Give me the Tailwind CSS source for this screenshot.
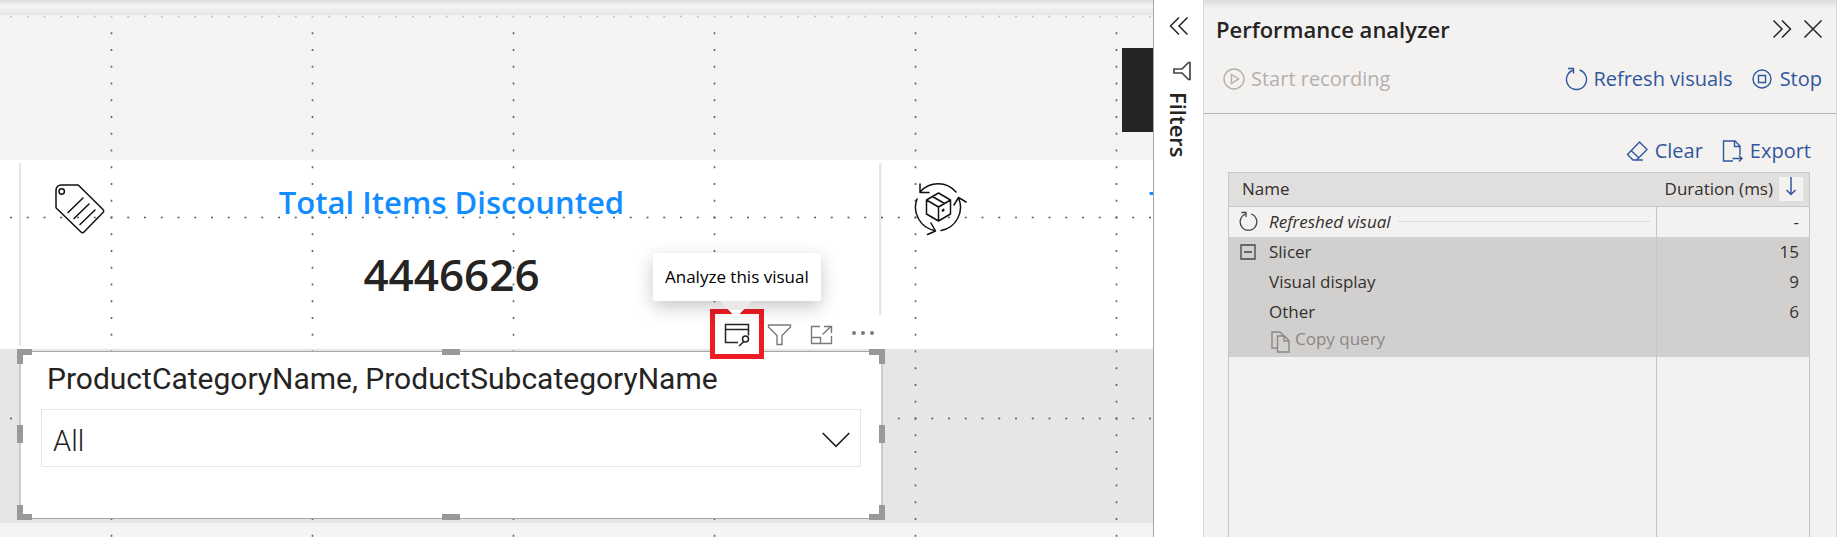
<!DOCTYPE html>
<html lang="en">
<head>
<meta charset="utf-8">
<meta name="viewport" content="width=device-width, initial-scale=1">
<title>Performance analyzer</title>
<script src="https://cdn.jsdelivr.net/npm/@tailwindcss/browser@4"></script>
</head>
<body class="flex h-screen overflow-hidden bg-[#f3f2f1] font-['Open_Sans','Noto_Sans',sans-serif] text-[#252423]">

<!-- Report canvas -->
<main class="relative flex min-w-0 flex-1 flex-col overflow-hidden bg-[#f4f4f4]">
  <!-- Dotted alignment grid -->
  <svg class="pointer-events-none absolute inset-0 z-10 h-full w-full" aria-hidden="true">
    <defs>
      <pattern id="dots-x" x="110.5" y="0" width="16.75" height="201" patternUnits="userSpaceOnUse"><circle cx="1" cy="16.500" r="1" fill="#555"/></pattern>
      <pattern id="dots-y" x="0" y="15.500" width="201" height="16.75" patternUnits="userSpaceOnUse"><circle cx="111.500" cy="1" r="1" fill="#555"/></pattern>
    </defs>
    <rect x="0" y="15" width="100%" height="5" fill="url(#dots-x)" opacity=".35"/>
    <rect x="0" y="30" width="100%" height="100%" fill="url(#dots-x)"/>
    <rect x="0" y="30" width="100%" height="100%" fill="url(#dots-y)"/>
  </svg>

  <div class="h-[15px] shrink-0 bg-linear-to-b from-[#dcdcdc] via-[#f5f5f5] via-40% to-[#e6e6e6]"></div>
  <section class="flex h-[145px] shrink-0 items-start justify-end pt-[33px]">
    <div class="relative z-20 h-[84px] w-[31px] bg-[#252423]"></div>
  </section>

  <section class="flex h-[189px] shrink-0 bg-white pt-[3px] pl-[19px]">
    <article class="flex h-[183px] w-[863px] shrink-0 border-l-2 border-[#e6e6e6]">
      <svg class="relative z-20 mt-[20px] ml-[33px] h-[52px] w-[52px] shrink-0" viewBox="0 0 52 52" fill="none" stroke="#111" stroke-width="1.5" stroke-linecap="round" stroke-linejoin="round" aria-hidden="true">
        <path d="M2 7a5 5 0 0 1 5-5H23.500a2 2 0 0 1 1.500.7L49 26.500a2 2 0 0 1 0 3L30 49a2 2 0 0 1-3 0L2.700 25.500A2 2 0 0 1 2 24z"/>
        <circle cx="7.700" cy="8.500" r="2.700"/>
        <path d="M29 15 14 29.500M35 21 20 35.500M41 27 26 41.500"/>
      </svg>
      <div class="relative z-20 flex flex-1 flex-col items-center pr-[82px]">
        <h2 class="mt-[17px] text-[31px] leading-[44px] font-semibold text-[#118dff]">Total Items Discounted</h2>
        <p class="mt-[20px] text-[44px] leading-[60px] font-semibold">4446626</p>
      </div>
      <div class="h-[152px] w-[3px] border-l-2 border-[#e6e6e6] bg-[#f6f6f6]"></div>
    </article>
    <article class="flex min-w-0 flex-1 justify-between overflow-hidden">
      <svg class="relative z-20 mt-[18px] ml-[31px] h-[56px] w-[56px] shrink-0" viewBox="0 0 56 56" fill="none" stroke="#111" stroke-width="1.500" stroke-linecap="round" stroke-linejoin="round" aria-hidden="true">
        <path d="M7.500 10.500A23.500 23.500 0 0 1 43 11M7 3v8.500h9M4 18A23.500 23.500 0 0 0 22 49.500M18 42l4.500 8-8 3.500M28 49.500A23.500 23.500 0 0 0 45.500 17M41 24l4.500-7.500L53 21"/>
        <path d="M25.500 12 37.500 19V33L25.500 40 13.500 33V19zM13.500 19l12 7 12-7M25.500 26v14M19.500 15.500l12 7"/>
        <path d="m29.500 29 1.200-.7v1.200l-1.200.7z"/>
      </svg>
      <h2 class="mt-[17px] w-[4px] overflow-hidden text-[31px] leading-[44px] font-semibold text-[#118dff]">T</h2>
    </article>
  </section>

  <section class="h-[174px] shrink-0 bg-[#e6e6e6] pt-[2px] pl-[19px]">
    <!-- Selected slicer visual -->
    <div class="relative z-20 flex h-[168px] w-[864px] flex-col border border-x-2 border-[#a6a6a6] border-x-[#cccccc] bg-white px-[20px]">
      <label for="category" class="mt-[8px] px-[6px] font-[Roboto,sans-serif] text-[30px] leading-[38px]">ProductCategoryName, ProductSubcategoryName</label>
      <div class="relative mt-[11px]">
        <select id="category" class="block h-[58px] w-full appearance-none border border-[#e6e6e6] bg-white px-[11px] pt-2 font-[Roboto,sans-serif] text-[29px] font-light"><option>All</option></select>
        <svg class="pointer-events-none absolute top-[23px] right-[11px] h-[16px] w-[28px]" viewBox="0 0 28 16" fill="none" stroke="#222" stroke-width="1.700" aria-hidden="true"><path d="M.7 1 14 14.300 27.300 1"/></svg>
      </div>
      <!-- Resize handles -->
      <svg class="pointer-events-none absolute -top-[3px] -left-[4px] h-[172px] w-[868px]" viewBox="0 0 868 172" fill="#999" aria-hidden="true">
        <path d="M0 0h15v6H6v9H0zM425 0h18v6h-18zM852 0h16v15h-6V6h-10zM0 76h6v18H0zM862 76h6v18h-6zM0 156h6v9h9v6H0zM425 165h18v6h-18zM862 156h6v15h-16v-6h10z"/>
      </svg>
    </div>
  </section>

  <!-- Visual header actions -->
  <div class="absolute top-[309px] left-[710px] z-30 flex h-[50px] items-start text-[#7a7a7a]">
    <button type="button" aria-label="Analyze this visual" class="flex h-[50px] w-[54px] items-center justify-center border-5 border-[#ed1c24] bg-white text-[#252423]">
      <svg class="h-[26px] w-[26px]" viewBox="0 0 26 26" fill="none" stroke="currentColor" stroke-width="1.500" aria-hidden="true"><path d="M14 21.500H1.500V3.500H24.500V14.500M1.500 8.500h23M15 25l5-4.500"/><circle cx="21.500" cy="18" r="3"/></svg>
    </button>
    <button type="button" aria-label="Filters" class="mt-[14px] ml-[3px]">
      <svg class="h-[24px] w-[25px]" viewBox="0 0 25 24" fill="none" stroke="currentColor" stroke-width="1.400" aria-hidden="true"><path d="M1.500 2h22v2L15 12.500V21.500h-5V12.500L1.500 4z"/></svg>
    </button>
    <button type="button" aria-label="Focus mode" class="mt-[15px] ml-[18px]">
      <svg class="h-[22px] w-[23px]" viewBox="0 0 23 22" fill="none" stroke="currentColor" stroke-width="1.400" aria-hidden="true"><path d="M10 2.500H1.500V19.500H21.500V12M1.500 13.500h9v6M12.500 10.500 21 2.500M14 2.500h7.500V9"/></svg>
    </button>
    <button type="button" aria-label="More options" class="mt-[20px] ml-[18px]">
      <svg class="h-[8px] w-[24px]" viewBox="0 0 24 8" fill="currentColor" aria-hidden="true"><circle cx="3" cy="4" r="2"/><circle cx="12" cy="4" r="2"/><circle cx="21" cy="4" r="2"/></svg>
    </button>
  </div>

  <!-- Tooltip -->
  <div role="tooltip" class="absolute top-[253px] left-[653px] z-40 rounded-xs bg-white px-[12px] py-[12px] text-[17px] leading-[24px] whitespace-nowrap text-black shadow-[0_6px_18px_rgba(0,0,0,0.22)]">Analyze this visual
    <svg class="absolute top-full left-[67px] h-[16px] w-[32px]" viewBox="0 0 32 16" aria-hidden="true"><path d="M0 0H32L19 13.500a4 4 0 0 1-6 0z" fill="#fff"/><path d="M0 0h32L23 9H9z" fill="#e9e9e9"/></svg>
  </div>
</main>

<!-- Collapsed filters pane -->
<aside class="flex w-[51px] shrink-0 flex-col items-center border-x border-l-[#a6a6a6] border-r-[#d8d8d8] bg-white pt-[16px]">
  <button type="button" aria-label="Expand filters" class="text-[#252423]">
    <svg class="h-[20px] w-[20px]" viewBox="0 0 20 20" fill="none" stroke="currentColor" stroke-width="1.500" aria-hidden="true"><path d="M10 1.500 1.500 10 10 18.500M18.500 1.500 10 10l8.500 8.500"/></svg>
  </button>
  <svg class="mt-[25px] ml-[6px] h-[20px] w-[18px]" viewBox="0 0 18 20" fill="none" stroke="#444" stroke-width="1.700" aria-hidden="true"><path d="M17 1.500v17h-1.500L9 12H1V8h8l6.500-6.500z"/></svg>
  <h2 class="mt-[11px] text-[22px] leading-[28px] font-semibold [writing-mode:vertical-rl]">Filters</h2>
</aside>

<!-- Performance analyzer pane -->
<aside class="flex w-[633px] shrink-0 flex-col border-r border-[#d8d8d8] bg-[#f3f2f1]">
  <header class="flex h-[58px] shrink-0 items-center justify-between bg-linear-to-b from-[#dddcdb] to-[#f3f2f1] to-15% pr-[13px] pl-[12px]">
    <h1 class="text-[22px] leading-[30px] font-semibold">Performance analyzer</h1>
    <div class="flex items-center gap-[11px]">
      <button type="button" aria-label="Collapse"><svg class="h-[20px] w-[20px]" viewBox="0 0 20 20" fill="none" stroke="#252423" stroke-width="1.500" aria-hidden="true"><path d="M1.500 1.500 10 10l-8.500 8.500M10 1.500l8.500 8.500-8.500 8.500"/></svg></button>
      <button type="button" aria-label="Close"><svg class="h-[20px] w-[20px]" viewBox="0 0 20 20" fill="none" stroke="#252423" stroke-width="1.500" aria-hidden="true"><path d="m1.500 1.500 17 17M18.500 1.500l-17 17"/></svg></button>
    </div>
  </header>
  <div class="flex h-[56px] shrink-0 items-start justify-between border-b border-[#b8b8b6] pt-[6px] pr-[14px] pl-[19px] text-[20px] leading-[30px] text-[#31589c]">
    <button type="button" disabled class="flex items-center gap-[6px] text-[#b3b0ad]">
      <svg class="h-[22px] w-[22px]" viewBox="0 0 22 22" fill="none" stroke="currentColor" stroke-width="1.400" aria-hidden="true"><circle cx="11" cy="11" r="10"/><path d="M8.500 6.500v9l7-4.500z"/></svg>Start recording
    </button>
    <div class="flex gap-[19px]">
      <button type="button" class="flex items-center gap-[5px]">
        <svg class="h-[24px] w-[23px]" viewBox="0 0 23 24" fill="none" stroke="currentColor" stroke-width="1.400" aria-hidden="true"><path d="M14.500 3A10 10 0 1 1 8.500 3M3 1.500h5.500v5"/></svg>Refresh visuals
      </button>
      <button type="button" class="flex items-center gap-[8px]">
        <svg class="h-[20px] w-[20px]" viewBox="0 0 20 20" fill="none" stroke="currentColor" stroke-width="1.400" aria-hidden="true"><circle cx="10" cy="10" r="9"/><path d="M6.500 6.500h7v7h-7z"/></svg>Stop
      </button>
    </div>
  </div>
  <div class="flex h-[58px] shrink-0 items-start justify-end gap-[19px] pt-[22px] pr-[25px] text-[20px] leading-[30px] text-[#31589c]">
    <button type="button" class="flex items-center gap-[7px]">
      <svg class="h-[22px] w-[22px]" viewBox="0 0 22 22" fill="none" stroke="currentColor" stroke-width="1.400" aria-hidden="true"><path d="M13.500 2 21 9.500 10.500 20H7L1.500 14.500zM5 10.500l8 7.500M7 20h10"/></svg>Clear
    </button>
    <button type="button" class="flex items-center gap-[6px]">
      <svg class="h-[24px] w-[22px]" viewBox="0 0 22 24" fill="none" stroke="currentColor" stroke-width="1.400" aria-hidden="true"><path d="M11 22H1.500V2H13l5 5v9M12.500 2v5.500H18M10.500 19.500H20M17 16.500l3 3-3 3"/></svg>Export
    </button>
  </div>

  <div class="mr-[26px] ml-[24px] flex flex-1 flex-col border border-b-0 border-[#c8c6c4]">
    <table class="w-full table-fixed border-collapse text-[17px] leading-[24px] text-[#33302e]">
      <colgroup><col><col class="w-[153px]"></colgroup>
      <thead>
        <tr class="h-[33px] border-b border-[#c8c6c4] bg-[#e1dfdd]">
          <th class="pl-[13px] text-left font-normal">Name</th>
          <th class="pr-[6px] font-normal">
            <div class="flex items-center justify-end gap-[6px] whitespace-nowrap">Duration (ms)
              <button type="button" aria-label="Sort by duration" class="flex h-[24px] w-[24px] justify-center bg-[#f3f2f1]"><svg class="h-[20px] w-[12px]" viewBox="0 0 12 20" fill="none" stroke="#31589c" stroke-width="1.500" aria-hidden="true"><path d="M6 0v17M1.500 13 6 17.500 10.500 13"/></svg></button>
            </div>
          </th>
        </tr>
      </thead>
      <tbody>
        <tr class="h-[31px]">
          <td class="border-r border-[#c8c6c4] pr-[6px] pl-[10px]">
            <div class="flex items-center">
              <svg class="h-[21px] w-[19px] shrink-0" viewBox="0 0 19 21" fill="none" stroke="#444" stroke-width="1.300" aria-hidden="true"><path d="M12 3A8.300 8.300 0 1 1 7 3M2.500 1.500H7v4.500"/></svg>
              <em class="ml-[11px] whitespace-nowrap">Refreshed visual</em>
              <span class="ml-[7px] h-px flex-1 bg-[#dddbd9]"></span>
            </div>
          </td>
          <td class="pr-[10px] text-right">-</td>
        </tr>
        <tr class="h-[30px] bg-[#d2d0ce]">
          <td class="border-r border-[#c8c6c4] pl-[11px]">
            <div class="flex items-center">
              <button type="button" aria-label="Collapse Slicer"><svg class="block h-[16px] w-[16px]" viewBox="0 0 16 16" fill="none" stroke="#444" stroke-width="1.300" aria-hidden="true"><path d="M1 1h14v14H1zM4 8h8"/></svg></button>
              <span class="ml-[13px]">Slicer</span>
            </div>
          </td>
          <td class="pr-[10px] text-right">15</td>
        </tr>
        <tr class="h-[30px] bg-[#d2d0ce]">
          <td class="border-r border-[#c8c6c4] pl-[40px]">Visual display</td>
          <td class="pr-[10px] text-right">9</td>
        </tr>
        <tr class="h-[30px] bg-[#d2d0ce]">
          <td class="border-r border-[#c8c6c4] pl-[40px]">Other</td>
          <td class="pr-[10px] text-right">6</td>
        </tr>
        <tr class="h-[30px] bg-[#d2d0ce]">
          <td class="border-r border-[#c8c6c4] pl-[42px] align-top">
            <button type="button" class="flex items-start gap-[5px] text-[#8a8886]">
              <svg class="mt-[4px] h-[22px] w-[19px]" viewBox="0 0 19 22" fill="none" stroke="currentColor" stroke-width="1.400" aria-hidden="true"><path d="M6 17H1V1h8l3.500 3.500M6.500 5h7L18 9.500V21H6.500zM13 5v5h5"/></svg>Copy query
            </button>
          </td>
          <td></td>
        </tr>
      </tbody>
    </table>
    <div class="mr-[152px] flex-1 border-r border-[#c8c6c4]"></div>
  </div>
</aside>
</body>
</html>
